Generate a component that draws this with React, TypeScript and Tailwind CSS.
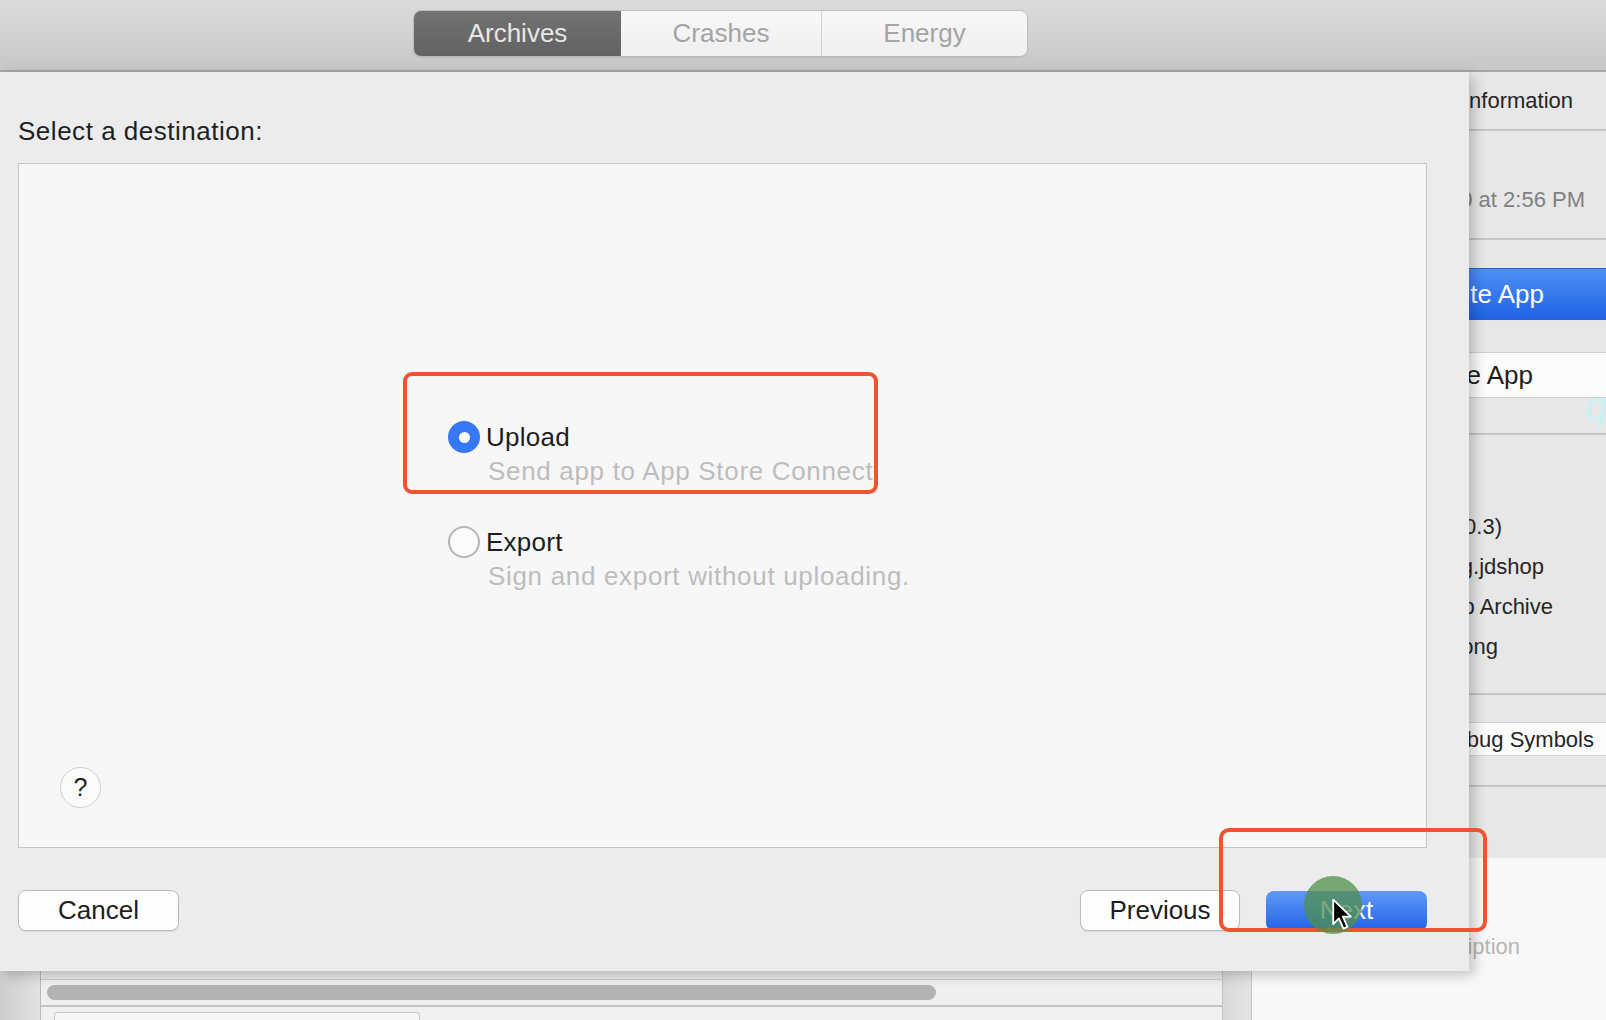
import React from "react";

const tabs = [
  { label: "Archives", active: true, width: "w-[207px]" },
  { label: "Crashes", active: false, width: "w-[200px]" },
  { label: "Energy", active: false, width: "w-[206px]" },
];

const details = [
  { text: "1.0 (1.0.3)", pr: "pr-[104px]" },
  { text: "com.jingdong.jdshop", pr: "pr-[62px]" },
  { text: "iOS App Archive", pr: "pr-[53px]" },
  { text: "Jingdong", pr: "pr-[108px]" },
];

function Radio({ checked }: { checked: boolean }) {
  if (checked) {
    return (
      <span className="flex h-[32px] w-[32px] shrink-0 items-center justify-center rounded-full bg-[#3478f6]">
        <span className="h-[11px] w-[11px] rounded-full bg-white" />
      </span>
    );
  }
  return (
    <span className="h-[32px] w-[32px] shrink-0 rounded-full border-2 border-[#b4b4b4] bg-[#fbfbfb]" />
  );
}

function Option({
  checked,
  title,
  desc,
}: {
  checked: boolean;
  title: string;
  desc: string;
}) {
  return (
    <div className="flex flex-col">
      <div className="flex h-[32px] items-center gap-[6px]">
        <Radio checked={checked} />
        <span className="text-[26px] leading-[32px] tracking-[0.01em] text-[#1d1d1d]">
          {title}
        </span>
      </div>
      <div className="mt-[1px] h-[34px] pl-[40px] text-[26px] leading-[34px] tracking-[0.026em] text-[#bdbdbd]">
        {desc}
      </div>
    </div>
  );
}

function Cursor() {
  return (
    <svg width="26" height="34" viewBox="0 0 22 30">
      <path
        d="M1.5 1.5 L1.5 23 L6.5 18 L10.5 27 L14 25.5 L10 16.5 L17 16.5 Z"
        fill="#000"
        stroke="#fff"
        strokeWidth="1.6"
        strokeLinejoin="round"
      />
    </svg>
  );
}

export default function App() {
  return (
    <div
      className="relative h-[1020px] w-[1606px] overflow-hidden bg-[#e6e6e6]"
      style={{ fontFamily: '"Liberation Sans", Arial, sans-serif' }}
    >
      {/* Toolbar */}
      <div className="h-[72px] border-b-2 border-[#a6a6a6] bg-gradient-to-b from-[#dcdcdc] to-[#c7c7c7]">
        <div className="ml-[413px] pt-[10px]">
          <div className="flex h-[47px] w-max overflow-hidden rounded-[8px] border border-[#bdbdbd] shadow-[0_1px_1px_rgba(0,0,0,0.08)]">
            {tabs.map((t, i) => (
              <div
                key={t.label}
                className={
                  t.active
                    ? `${t.width} flex items-center justify-center bg-gradient-to-b from-[#727272] to-[#626262] text-[26px] text-[#e6e6e6]`
                    : `${t.width} flex items-center justify-center bg-gradient-to-b from-[#f8f8f8] to-[#efefef] text-[26px] text-[#a4a4a4] ${
                        i === 2 ? "border-l border-[#d2d2d2]" : ""
                      }`
                }
              >
                {t.label}
              </div>
            ))}
          </div>
        </div>
      </div>

      {/* Window body behind the sheet */}
      <div className="flex h-[948px]">
        <div className="flex w-[1222px] flex-col">
          <div className="flex-1 bg-[#e4e4e4]" />
          <div className="flex h-[49px]">
            <div className="w-[41px] border-r border-[#b9b9b9] bg-gradient-to-r from-[#cdcdcd] to-[#e2e2e2]" />
            <div className="flex flex-1 flex-col bg-[#ececec]">
              <div className="h-[9px] border-b border-[#cdcdcd] bg-[#e9e9e9]" />
              <div className="flex h-[27px] items-center border-b-2 border-[#c3c3c3] bg-[#efefef] pl-[6px]">
                <div className="h-[15px] w-[889px] rounded-full bg-[#b3b3b3]" />
              </div>
              <div className="flex-1 bg-[#f0f0f0] pl-[13px] pt-[5px]">
                <div className="h-full w-[366px] rounded-t-[4px] border border-b-0 border-[#c6c6c6] bg-[#f7f7f7]" />
              </div>
            </div>
          </div>
        </div>
        <div className="w-[30px] border-x border-[#c2c2c2] bg-gradient-to-r from-[#d8d8d8] to-[#e4e4e4]" />

        {/* Inspector */}
        <div className="relative flex flex-1 flex-col bg-[#e7e7e7] text-[22px] text-[#262626]">
          <div className="flex h-[59px] items-center justify-end border-b-2 border-[#c4c4c4] pr-[33px]">
            Archive Information
          </div>
          <div className="flex h-[109px] justify-end border-b-2 border-[#c4c4c4] pr-[21px] pt-[55px] leading-[28px] text-[#808080]">
            Jan 8, 2020 at 2:56 PM
          </div>
          <div className="flex h-[195px] flex-col border-b-2 border-[#c4c4c4] pt-[28px]">
            <div className="flex h-[52px] items-center justify-end border-y border-[#2a5fc4] bg-gradient-to-b from-[#4d8ff6] to-[#1f62e4] pr-[62px] text-[26px] text-white">
              Distribute App
            </div>
            <div className="mt-[32px] flex h-[46px] items-center justify-end border-y border-[#cfcfcf] bg-[#fbfbfb] pr-[73px] text-[26px] text-[#1d1d1d]">
              Validate App
            </div>
          </div>
          <div className="flex h-[260px] flex-col border-b-2 border-[#c4c4c4] pt-[71px]">
            {details.map((d) => (
              <div
                key={d.text}
                className={`flex h-[40px] items-center justify-end ${d.pr}`}
              >
                {d.text}
              </div>
            ))}
          </div>
          <div className="flex h-[92px] flex-col border-b-2 border-[#c4c4c4] pt-[27px]">
            <div className="flex h-[34px] items-center justify-end border-y border-[#d2d2d2] bg-[#fbfbfb] pr-[12px]">
              Download Debug Symbols
            </div>
          </div>
          <div className="h-[71px]" />
          <div className="flex flex-1 justify-end bg-[#f8f8f8] pr-[86px] pt-[75px] leading-[28px] text-[#b6b6b6]">
            No Description
          </div>
          <span className="absolute left-[333px] top-[314px] text-[40px] italic leading-none text-[#c9f1f3]">
            q
          </span>
        </div>
      </div>

      {/* Sheet */}
      <div className="absolute left-0 top-[72px] z-10 flex h-[899px] w-[1469px] flex-col bg-[#ececec] pl-[18px] pr-[42px] shadow-[5px_4px_12px_rgba(0,0,0,0.22)]">
        <div className="mt-[44px] h-[30px] text-[26px] leading-[30px] tracking-[0.02em] text-[#1f1f1f]">
          Select a destination:
        </div>
        <div className="mt-[17px] flex h-[685px] flex-col border border-[#c5c5c5] bg-[#f7f7f7]">
          <div className="relative ml-[429px] mt-[257px] flex w-max flex-col gap-[38px]">
            <Option
              checked
              title="Upload"
              desc="Send app to App Store Connect"
            />
            <Option
              checked={false}
              title="Export"
              desc="Sign and export without uploading."
            />
            <div className="absolute left-[-45px] top-[-49px] h-[122px] w-[475px] rounded-[9px] border-4 border-[#ee5430]" />
          </div>
          <div className="mb-[39px] ml-[41px] mt-auto flex h-[41px] w-[41px] items-center justify-center rounded-full border border-[#cfcfcf] bg-[#fbfbfb] text-[25px] text-[#222]">
            ?
          </div>
        </div>
        <div className="mt-[42px] flex items-center">
          <div className="flex h-[41px] w-[161px] items-center justify-center rounded-[8px] border border-[#bcbcbc] bg-[#fdfdfd] text-[26px] text-[#1d1d1d] shadow-[0_1px_1px_rgba(0,0,0,0.08)]">
            Cancel
          </div>
          <div className="ml-auto flex h-[41px] w-[160px] items-center justify-center rounded-[8px] border border-[#bcbcbc] bg-[#fdfdfd] text-[26px] text-[#1d1d1d] shadow-[0_1px_1px_rgba(0,0,0,0.08)]">
            Previous
          </div>
          <div className="ml-[26px] flex h-[40px] w-[161px] items-center justify-center rounded-[8px] bg-gradient-to-b from-[#6198f7] to-[#1e62e6] text-[26px] text-white">
            Next
          </div>
        </div>
      </div>

      {/* Annotation overlays */}
      <div className="absolute left-[1219px] top-[828px] z-20 h-[104px] w-[268px] rounded-[10px] border-4 border-[#ee5430]" />
      <div className="absolute left-[1304px] top-[876px] z-20 h-[58px] w-[58px] rounded-full bg-[rgba(80,143,75,0.75)]" />
      <div className="absolute left-[1331px] top-[898px] z-30">
        <Cursor />
      </div>
    </div>
  );
}
